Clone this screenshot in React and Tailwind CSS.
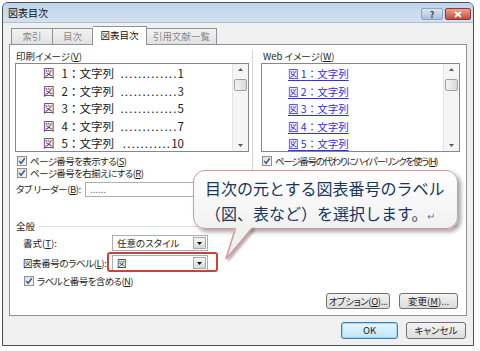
import React from 'react'

const ui = "font-['Noto_Sans_CJK_JP',sans-serif] [font-feature-settings:'palt'] text-[#1e1e1e]"

function Check({ children, tight }) {
  return (
    <div className="flex items-center gap-[3px]">
      <span className="flex h-[10px] w-[10px] shrink-0 items-center justify-center border border-[#8f8f8f] bg-linear-to-br from-[#dedede] to-[#fbfbfb]">
        <svg width="8" height="8" viewBox="0 0 8 8">
          <path d="M1.2 4 L3.1 6.2 L6.8 1.2" fill="none" stroke="#3a5a9c" strokeWidth="1.5" />
        </svg>
      </span>
      <span className={tight ? 'whitespace-nowrap leading-[12px] tracking-[-1.3px]' : 'whitespace-nowrap leading-[12px] tracking-[-0.6px]'}>{children}</span>
    </div>
  )
}

function Select({ value }) {
  return (
    <div className="flex h-[16px] w-[96px] border border-[#abadb3] bg-white">
      <span className="flex-1 whitespace-nowrap pl-[4px] leading-[14px]">{value}</span>
      <span className="my-[1px] mr-[1px] flex w-[13px] items-center justify-center border border-[#a9a9a9] bg-linear-to-b from-[#f6f6f6] to-[#d8d8d8]">
        <svg width="5" height="3" viewBox="0 0 5 3"><path d="M0 0 H5 L2.5 3Z" fill="#111" /></svg>
      </span>
    </div>
  )
}

function Scroll() {
  return (
    <div className="flex w-[16px] flex-col items-center border-l border-[#e4e4e4] bg-[#f5f5f5]">
      <svg className="mt-[4px]" width="5" height="3" viewBox="0 0 5 3"><path d="M2.5 0 L5 3 H0Z" fill="#5a5a5a" /></svg>
      <div className="mt-[8px] h-[12px] w-[13px] rounded-[2px] border border-[#a0a0a0] bg-linear-to-r from-[#f4f4f4] to-[#dadada]" />
      <div className="flex-1" />
      <svg className="mb-[4px]" width="5" height="3" viewBox="0 0 5 3"><path d="M0 0 H5 L2.5 3Z" fill="#5a5a5a" /></svg>
    </div>
  )
}

// [number, page, leader dots]
const entries = [
  ['1', '1', '.............'],
  ['2', '3', '.............'],
  ['3', '5', '.............'],
  ['4', '7', '.............'],
  ['5', '10', '...........'],
]

export default function App() {
  return (
    <div className={`relative h-[351px] w-[480px] overflow-hidden bg-white pl-[2px] pt-[2px] ${ui}`}>
      {/* window */}
      <div className="flex h-[344px] w-[472px] flex-col overflow-hidden rounded-t-[6px] border border-[#4a4f57] bg-[#c9daee]">
        <div className="flex h-[19px] items-start justify-between bg-linear-to-b from-[#c0d4ec] to-[#d3e1f2] pl-[5px] pr-[2px]">
          <span className="mt-[3px] text-[10px] leading-[14px] text-[#101010]">図表目次</span>
          <div className="mt-[5px] flex gap-[2px]">
            <span className="flex h-[12px] w-[22px] items-center justify-center rounded-[2px] border border-[#8ea6c4] bg-linear-to-b from-[#d9e5f3] to-[#aebfd6] text-[9px] font-bold leading-none text-[#34455e]">?</span>
            <span className="flex h-[12px] w-[26px] items-center justify-center rounded-[2px] border border-[#8d3b32] bg-linear-to-b from-[#e8a493] to-[#c4473a]">
              <svg width="8" height="7" viewBox="0 0 8 7"><path d="M1 1 L7 6 M7 1 L1 6" stroke="#fff" strokeWidth="1.8" /></svg>
            </span>
          </div>
        </div>

        <div className="flex flex-1 flex-col border-t border-[#aebfd4] bg-[#f0f0f0] px-[6px]">
          {/* tabs */}
          <div className="flex h-[21px] items-end text-[9.5px]">
            <div className="ml-[2px] flex h-[16px] w-[42px] items-center justify-center border border-b-0 border-[#8d919a] bg-linear-to-b from-[#f3f3f3] to-[#e1e1e1] text-[#8a8a8a]">索引</div>
            <div className="flex h-[16px] w-[40px] items-center justify-center border border-b-0 border-l-0 border-[#8d919a] bg-linear-to-b from-[#f3f3f3] to-[#e1e1e1] text-[#8a8a8a]">目次</div>
            <div className="relative top-[1px] z-10 flex h-[19px] w-[54px] items-center justify-center border border-b-0 border-l-0 border-[#8d919a] bg-white pb-[1px] text-[#111]">図表目次</div>
            <div className="flex h-[16px] w-[70px] items-center justify-center border border-b-0 border-l-0 border-[#8d919a] bg-linear-to-b from-[#f3f3f3] to-[#e1e1e1] text-[#8a8a8a]">引用文献一覧</div>
          </div>

          {/* panel */}
          <div className="flex h-[272px] flex-col border border-[#8d919a] bg-white pl-[5px] text-[9.5px]">
            <div className="flex pt-[5px]">
              <div className="flex w-[234px] flex-col">
                <div className="h-[13px] pl-[1px] leading-[13px]">印刷イメージ(<u>V</u>)</div>
                <div className="flex h-[89px] border border-[#828790]">
                  <div className="flex-1 pl-[27px] pt-[1px] font-['Noto_Sans_CJK_JP',sans-serif] text-[11.5px] leading-[17.5px] text-[#222] [font-feature-settings:normal]">
                    {entries.map(([n, p, dots]) => (
                      <div key={n} className="flex w-[141px] whitespace-nowrap">
                        <span className="text-[#4b3566]">図</span>
                        <span className="ml-[7px]">{n}</span>
                        <span>：文字列</span>
                        <span className="flex-1 text-right tracking-[1.2px]">{dots}</span>
                        <span>{p}</span>
                      </div>
                    ))}
                  </div>
                  <Scroll />
                </div>
                <div className="mt-[3px] flex h-[12px] items-center pl-[2px]">
                  <Check>ページ番号を表示する(<u>S</u>)</Check>
                </div>
                <div className="flex h-[12px] items-center pl-[2px]">
                  <Check>ページ番号を右揃えにする(<u>R</u>)</Check>
                </div>
                <div className="mt-[3px] flex h-[15px] items-center pl-[1px]">
                  <span className="w-[69px] whitespace-nowrap tracking-[-0.4px]">タブ リーダー(<u>B</u>):</span>
                  <div className="flex h-[15px] w-[145px] items-center border border-[#abadb3] bg-white pl-[4px] text-[#555]">......</div>
                </div>
              </div>
              <div className="ml-[3px] w-px self-stretch bg-[#d6d6d6]" />
              <div className="ml-[8px] flex w-[199px] flex-col">
                <div className="h-[13px] pl-[2px] leading-[13px]">Web イメージ(<u>W</u>)</div>
                <div className="flex h-[89px] border border-[#828790]">
                  <div className="flex-1 pl-[26px] pt-[1px] font-['Noto_Sans_CJK_JP',sans-serif] text-[10.5px] leading-[17.5px] text-[#3030ee] [font-feature-settings:normal]">
                    {entries.map(([n]) => (
                      <div key={n}>
                        <span className="underline underline-offset-[2px]">図 {n}：文字列</span>
                      </div>
                    ))}
                  </div>
                  <Scroll />
                </div>
                <div className="mt-[3px] flex h-[12px] items-center pl-[1px]">
                  <Check tight>ページ番号の代わりにハイパーリンクを使う(<u>H</u>)</Check>
                </div>
              </div>
            </div>

            <div className="mt-[23px] flex h-[13px] items-center pl-[1px]">
              <span className="leading-[13px]">全般</span>
              <div className="ml-[4px] mr-[8px] h-px flex-1 bg-[#d8dde3]" />
            </div>
            <div className="mt-[2px] flex h-[16px] items-center pl-[8px]">
              <span className="w-[89px] whitespace-nowrap">書式(<u>T</u>):</span>
              <Select value="任意のスタイル" />
            </div>
            <div className="mt-[4px] flex h-[16px] items-center pl-[8px]">
              <span className="w-[89px] whitespace-nowrap tracking-[-0.4px]">図表番号のラベル(<u>L</u>):</span>
              <Select value="図" />
            </div>
            <div className="mt-[4px] flex h-[12px] items-center pl-[9px]">
              <Check>ラベルと番号を含める(<u>N</u>)</Check>
            </div>
            <div className="mt-[6px] flex justify-end gap-[9px] pr-[8px]">
              <button className="h-[16px] w-[64px] whitespace-nowrap rounded-[3px] border border-[#707070] bg-linear-to-b from-[#f3f3f3] to-[#dcdcdc] leading-[14px] tracking-[-0.4px]">オプション(<u>O</u>)...</button>
              <button className="h-[16px] w-[59px] whitespace-nowrap rounded-[3px] border border-[#707070] bg-linear-to-b from-[#f3f3f3] to-[#dcdcdc] leading-[14px]">変更(<u>M</u>)...</button>
            </div>
          </div>

          <div className="mt-[6px] flex justify-end gap-[8px] pr-[1px] text-[9.5px]">
            <button className="h-[17px] w-[57px] rounded-[3px] border border-[#3c7fb1] bg-linear-to-b from-[#eaf6fd] to-[#bee6fd] leading-[15px] shadow-[inset_0_0_0_1px_#9fd6f5]">OK</button>
            <button className="h-[17px] w-[60px] rounded-[3px] border border-[#707070] bg-linear-to-b from-[#f3f3f3] to-[#dcdcdc] leading-[15px]">キャンセル</button>
          </div>
        </div>
      </div>

      {/* red highlight */}
      <div className="absolute left-[107px] top-[252px] h-[20px] w-[111px] rounded-[3px] border-2 border-[#c8423a]" />

      {/* callout */}
      <div className="absolute left-[193px] top-[170px] h-[59px] w-[265px] rounded-[12px] border-[1.5px] border-[#d99694] bg-linear-to-b from-white to-[#f1f1f1] pl-[11px] pt-[5px] font-['Noto_Sans_CJK_JP',sans-serif] text-[16px] leading-[25px] text-[#17365d] shadow-[3px_3px_4px_rgba(0,0,0,0.35)] [font-feature-settings:normal]">
        <div className="whitespace-nowrap">目次の元とする図表番号のラベル</div>
        <div className="whitespace-nowrap">（図、表など）を選択します。<span className="text-[10px] text-[#6b7b94]">↵</span></div>
      </div>
      <svg className="absolute left-[223px] top-[226px] drop-shadow-[2px_2px_1px_rgba(0,0,0,0.3)]" width="34" height="36" viewBox="0 0 34 36">
        <polygon points="12,0 3,33 30,0" fill="#f1f1f1" />
        <path d="M12.5 2 L3 33 L29.5 2" fill="none" stroke="#d99694" strokeWidth="1.5" />
      </svg>
    </div>
  )
}
